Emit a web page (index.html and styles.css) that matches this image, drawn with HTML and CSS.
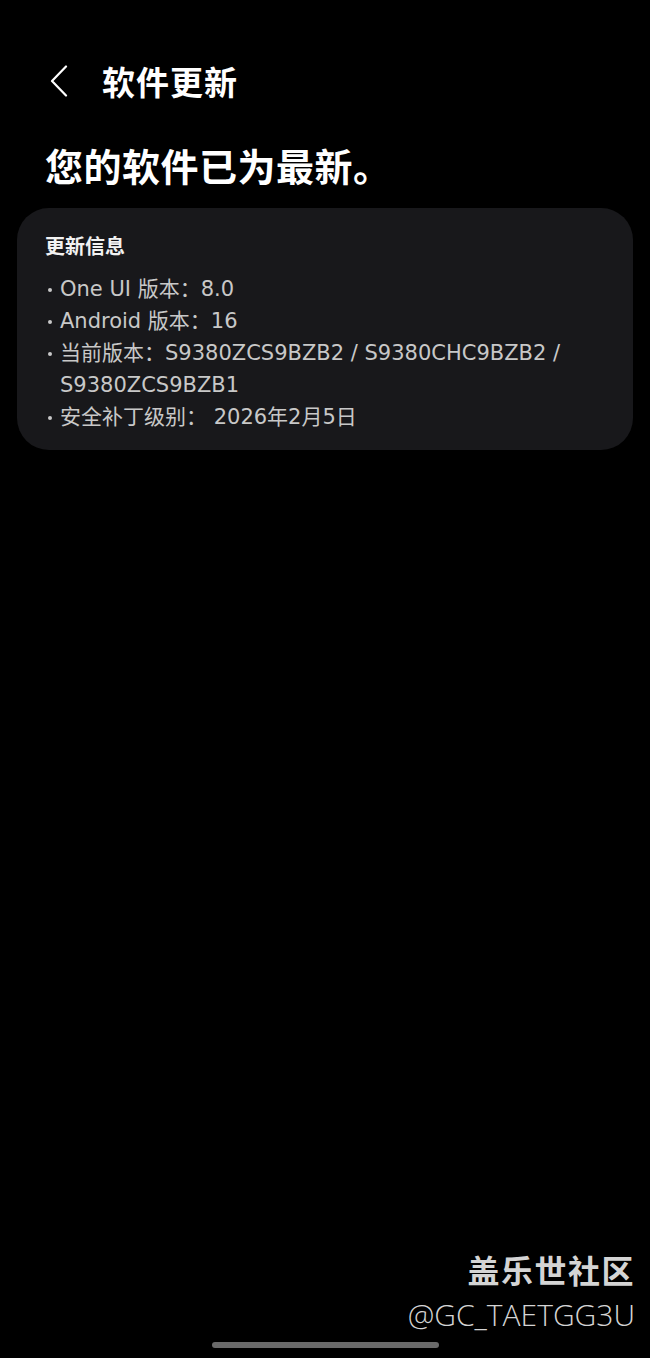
FILE: index.html
```html
<!DOCTYPE html>
<html lang="zh-CN">
<head>
  <meta charset="UTF-8" />
  <title>软件更新</title>
  <link rel="stylesheet" href="styles.css">
</head>
<body>
  <div class="screen">
    <header class="topbar">
      <button class="back" aria-label="返回">
        <svg width="18" height="32" viewBox="0 0 18 32">
          <path d="M16 1.5 L2 16 L16 30.5" fill="none" stroke="#fff" stroke-width="2.2" stroke-linecap="round" stroke-linejoin="round"/>
        </svg>
      </button>
      <span class="title">软件更新</span>
    </header>

    <h1 class="status">您的软件已为最新。</h1>

    <section class="card">
      <div class="card-title">更新信息</div>
      <ul class="info">
        <li>One UI 版本：8.0</li>
        <li>Android 版本：16</li>
        <li>当前版本：S9380ZCS9BZB2 / S9380CHC9BZB2 / S9380ZCS9BZB1</li>
        <li>安全补丁级别： 2026年2月5日</li>
      </ul>
    </section>

    <div class="spacer"></div>

    <div class="watermark">
      <div class="wm-name">盖乐世社区</div>
      <div class="wm-id">@GC_TAETGG3U</div>
    </div>
    <div class="homebar"></div>
  </div>
</body>
</html>
```

FILE: styles.css
```css
html, body {
  margin: 0;
  padding: 0;
  background: #000;
}

body {
  font-family: Roboto, "Noto Sans CJK SC", sans-serif;
  color: #fff;
}

.screen {
  height: 1358px;
  display: flex;
  flex-direction: column;
  box-sizing: border-box;
  padding: 59px 17px 0 17px;
}

.topbar {
  display: flex;
  align-items: center;
  height: 44px;
  gap: 34px;
  padding-left: 33px;
}

.back {
  background: none;
  border: none;
  padding: 0;
  display: flex;
  cursor: pointer;
}

.title {
  font-size: 33px;
  font-weight: 700;
  letter-spacing: 1px;
}

.status {
  margin: 41px 0 0 28px;
  font-size: 38px;
  font-weight: 700;
  line-height: 48px;
  letter-spacing: 0.5px;
}

.card {
  margin-top: 16px;
  background: #18181b;
  border-radius: 32px;
  padding: 25px 28px 17px 28px;
}

.card-title {
  font-size: 20px;
  font-weight: 700;
  line-height: 28px;
  color: #f2f2f2;
}

.info {
  list-style: none;
  margin: 12px 0 0;
  padding: 0;
  color: #c8c8c8;
  font-family: "DejaVu Sans", "Noto Sans CJK SC", sans-serif;
  font-size: 21px;
  line-height: 32px;
}

.info li {
  position: relative;
  padding-left: 15px;
  padding-right: 10px;
}

.info li::before {
  content: "";
  position: absolute;
  left: 3px;
  top: 15px;
  width: 4px;
  height: 4px;
  border-radius: 50%;
  background: #c8c8c8;
}

.spacer {
  flex: 1;
}

.watermark {
  text-align: right;
  margin-right: -2px;
  color: #d4d4d4;
}

.wm-name {
  font-size: 32px;
  font-weight: 700;
  line-height: 40px;
  letter-spacing: 1.5px;
}

.wm-id {
  font-family: "Open Sans", "DejaVu Sans", sans-serif;
  font-size: 30px;
  font-weight: 300;
  line-height: 46px;
}

.homebar {
  align-self: center;
  width: 227px;
  height: 6px;
  border-radius: 3px;
  background: #6a6a6a;
  margin: 4px 0 10px;
}
```
